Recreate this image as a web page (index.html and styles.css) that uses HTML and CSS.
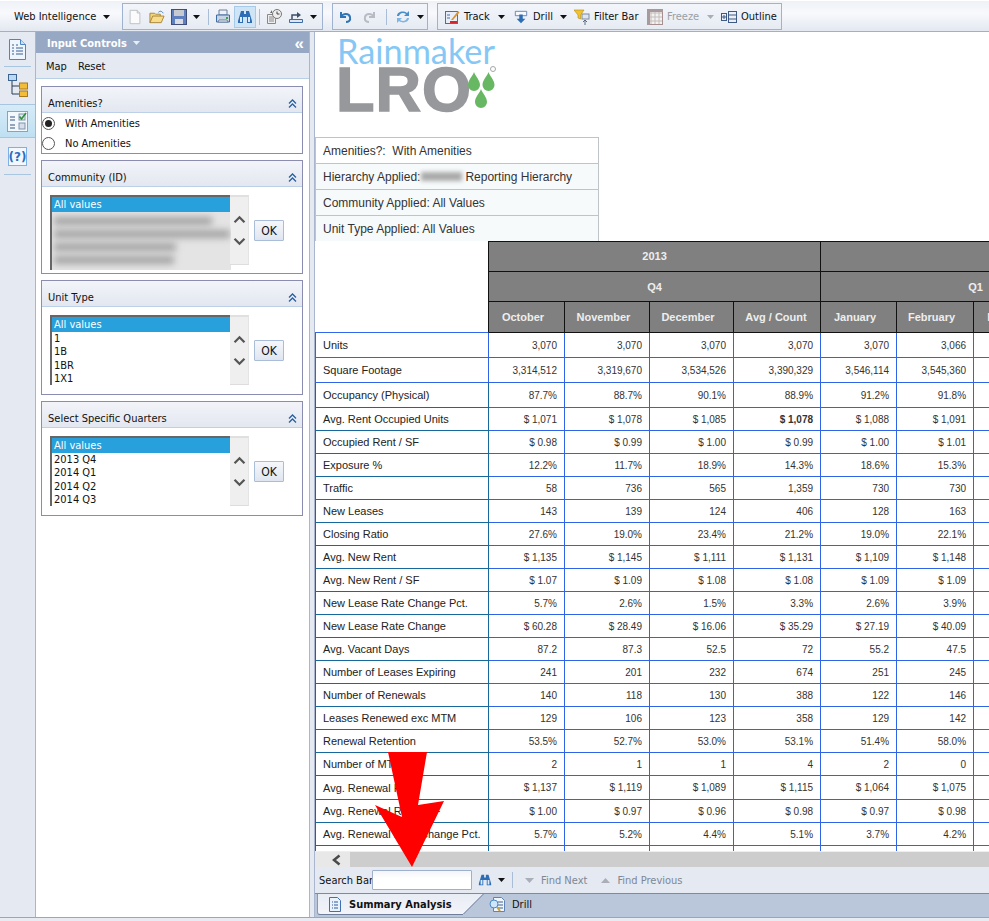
FILE: index.html
```html
<!DOCTYPE html>
<html lang="en">
<head>
<meta charset="utf-8">
<title>Web Intelligence</title>
<link rel="stylesheet" href="styles.css">
</head>
<body>
<svg class="defs" width="0" height="0" aria-hidden="true">
  <defs>
    <symbol id="binoc" viewBox="0 0 16 16"><path d="M4 2h3v3h2V2h3l3 10v2H10V8H6v6H1v-2z" fill="#2d6db5"/><path d="M3 8h2v5H3zm8 0h2v5h-2z" fill="#dcecff"/></symbol>
    <symbol id="caret" viewBox="0 0 7 4"><path d="M0 0h7L3.5 4z"/></symbol>
    <symbol id="dbl" viewBox="0 0 9 9"><path d="M1 4.500 4.500 1 8 4.500M1 8.500 4.500 5 8 8.500" fill="none" stroke="#2a5f9c" stroke-width="1.300"/></symbol>
    <symbol id="up" viewBox="0 0 14 10"><path d="M1.500 8 7 2.500 12.500 8" fill="none" stroke="#555" stroke-width="2.500"/></symbol>
    <symbol id="down" viewBox="0 0 14 10"><path d="M1.500 2 7 7.500 12.500 2" fill="none" stroke="#555" stroke-width="2.500"/></symbol>
  </defs>
</svg>
<div class="app">
  <header class="toolbar">
    <div class="brand"><span>Web Intelligence</span><svg class="caret"><use href="#caret"/></svg></div>
    <div class="tgroup g1">
      <svg class="ic16 nudge" viewBox="0 0 16 18"><path d="M2.500 1.500h8l3 3v12h-11z" fill="#fbfbfb" stroke="#b9bcc0"/><path d="M10.500 1.500v3h3" fill="#e8e8e8" stroke="#b9bcc0"/></svg>
      <svg class="ic16 m6" viewBox="0 0 17 16"><path d="M1 14V4h5l1 1h5v2" fill="#f0d77c" stroke="#a8843c"/><path d="M1 14 4 7h12l-3 7z" fill="#f7dc8a" stroke="#a8843c"/><path d="M10 3c2-2 4-1 5 1" fill="none" stroke="#3778b8"/></svg>
      <svg class="ic16 m6" viewBox="0 0 16 16"><rect x=".5" y=".5" width="15" height="15" fill="#5f7fbe" stroke="#3f4f7a"/><rect x="3" y="1" width="10" height="6" fill="#c6c9cf"/><rect x="4" y="10" width="8" height="5" fill="#d9dce2"/></svg>
      <svg class="caret m6"><use href="#caret"/></svg>
      <i class="tsep s1"></i>
      <svg class="ic16 m6" viewBox="0 0 16 16"><path d="M4 1h8v5H4z" fill="#eef1f6" stroke="#6d7f9a"/><path d="M1.500 6h13v7h-13z" fill="#c7d4e6" stroke="#3d6da8"/><path d="M3 13l1-2h8l1 2z" fill="#fff" stroke="#6d7f9a"/><rect x="11" y="8" width="2" height="2" fill="#37a34a"/></svg>
      <span class="active"><svg class="ic16"><use href="#binoc"/></svg></span>
      <i class="tsep s2"></i>
      <svg class="ic16 m6" viewBox="0 0 16 16"><path d="M1.500 5.500h8v9h-8z" fill="#eee" stroke="#888"/><path d="M3 8h5M3 10h5M3 12h5" stroke="#888"/><circle cx="11" cy="5" r="4.500" fill="#eee" stroke="#777"/><path d="M11 2.500V5h2.500" fill="none" stroke="#444"/><path d="M4 4 6 1v3z" fill="#666"/></svg>
      <svg class="ic16 m6" viewBox="0 0 16 16"><path d="M1.500 10.500h13v3h-13z" fill="#dfe6f0" stroke="#3d6da8"/><path d="M4 10V6h6" fill="none" stroke="#3d4f6a" stroke-width="1.500"/><path d="M9 3l4 3-4 3z" fill="#3d4f6a"/></svg>
      <svg class="caret m6"><use href="#caret"/></svg>
    </div>
    <div class="tgroup g2">
      <svg class="ic14" viewBox="0 0 14 14"><path d="M3 2v5h5M3 7c2-4 8-4 9 0s-2 5-4 5" fill="none" stroke="#2f73b5" stroke-width="2"/></svg>
      <svg class="ic14 m11" viewBox="0 0 14 14"><path d="M11 2v5H6M11 7C9 3 3 3 2 7s2 5 4 5" fill="none" stroke="#b8bcc2" stroke-width="2"/></svg>
      <i class="tsep s3"></i>
      <svg class="ic16 m8" viewBox="0 0 16 16"><path d="M2 7c0-4 6-6 10-3l2-2v5H9l2-2C8 3 5 4 4 7z" fill="#4a8dcb"/><path d="M14 9c0 4-6 6-10 3l-2 2V9h5l-2 2c3 2 6 1 7-2z" fill="#7fb5e3"/></svg>
      <svg class="caret m6"><use href="#caret"/></svg>
    </div>
    <div class="tgroup g3">
      <svg class="ic16" viewBox="0 0 16 16"><rect x="1.500" y="2.500" width="12" height="12" fill="#e8eef8" stroke="#4a6fa8"/><path d="M3 6h3M3 9h3" stroke="#4a6fa8"/><path d="M6 13h7" stroke="#d8232a" stroke-width="2"/><path d="M7 11 14 2l1.500 1.500L9 11z" fill="#e0912f"/></svg>
      <span class="tlabel t1">Track</span>
      <svg class="caret m7"><use href="#caret"/></svg>
      <svg class="ic14 m9" viewBox="0 0 14 16"><path d="M.500 1.500h13v5h-13z" fill="#f6f8fb" stroke="#5a7db0"/><path d="M5 5h4v5h3l-5 5-5-5h3z" fill="#2d6db5"/></svg>
      <span class="tlabel t2 wide">Drill</span>
      <svg class="caret m7"><use href="#caret"/></svg>
      <svg class="ic16 m7" viewBox="0 0 16 16"><path d="M0 1h10L6.500 6v4L4 9V6z" fill="#f2c230" stroke="#b38a12" stroke-width=".6"/><rect x="8" y="5" width="7" height="5" fill="#dfe6f0" stroke="#7a8aa0"/><path d="M11 16v-5M9 13l2-2 2 2" fill="none" stroke="#5a6a80"/></svg>
      <span class="tlabel t3">Filter Bar</span>
      <svg class="ic16 m9" viewBox="0 0 16 16"><rect x=".5" y=".5" width="15" height="15" fill="#f2f2f2" stroke="#a78f8f"/><path d="M1 4h14M1 8h14M1 12h14M4 1v14M8 1v14M12 1v14" stroke="#c4bcbc"/><path d="M0 0h16v3H3v13H0z" fill="#a89a9a"/></svg>
      <span class="tlabel t4 dim">Freeze</span>
      <svg class="caret m8 dimc"><use href="#caret"/></svg>
      <svg class="ic16 m7" viewBox="0 0 16 12"><rect x=".5" y="2.500" width="5" height="7" fill="none" stroke="#3e5a85"/><path d="M1 6h4M3 4v4" stroke="#3e5a85"/><rect x="7.500" y=".5" width="8" height="11" fill="none" stroke="#3e5a85"/><path d="M7.500 4h8M7.500 8h8" stroke="#3e5a85"/></svg>
      <span class="tlabel t5">Outline</span>
    </div>
  </header>

  <div class="main">
    <nav class="rail">
      <div class="rail-item ri1"><svg width="17" height="21" viewBox="0 0 17 21"><path d="M.5.500h11l5 5v15H.5z" fill="#eef5fd" stroke="#4d86c6"/><path d="M11.500.500v5h5" fill="#cfe0f4" stroke="#4d86c6"/><path d="M3 6h2M3 9h2M3 12h2M3 15h2M7 6h2M7 9h7M7 12h7M7 15h7" stroke="#3b5f8f"/></svg></div>
      <i class="rail-sep"></i>
      <div class="rail-item ri2"><svg width="20" height="23" viewBox="0 0 20 23"><rect x=".5" y=".5" width="8" height="6" fill="#bcd9f4" stroke="#3a648f"/><path d="M4 7v13h7M4 12h7" fill="none" stroke="#2a3f55"/><rect x="11.500" y="9" width="8" height="6" fill="#f3bd3a" stroke="#a87a1a"/><rect x="11.500" y="17" width="8" height="5.500" fill="#f3bd3a" stroke="#a87a1a"/></svg></div>
      <div class="rail-item selected"><svg width="21" height="21" viewBox="0 0 21 21"><rect x=".5" y=".5" width="20" height="20" fill="#f3f8fd" stroke="#7aa6cf"/><path d="M3 6h5M3 14h5" stroke="#33557f" stroke-width="1.200"/><path d="M3 9h5M3 17h5" stroke="#33557f" stroke-width="1.200"/><rect x="12" y="3" width="6" height="6" fill="#dfe7f0" stroke="#7f93ad"/><path d="M12.500 5.500 14.500 8 19 2" fill="none" stroke="#2f8f3a" stroke-width="1.600"/><rect x="12" y="12" width="6" height="6" fill="#d6deea" stroke="#7f93ad"/></svg></div>
      <div class="rail-item ri4"><svg width="19" height="19" viewBox="0 0 19 19"><rect x=".5" y=".5" width="18" height="18" fill="#f3f8fe" stroke="#7db0e6"/><text x="9.500" y="14" text-anchor="middle" class="help">(?)</text></svg></div>
      <i class="rail-sep last"></i>
    </nav>

    <aside class="panel">
      <div class="panel-head"><span>Input Controls</span><svg class="caret light"><use href="#caret"/></svg><b class="collapse">«</b></div>
      <div class="panel-sub"><span>Map</span><span>Reset</span></div>
      <div class="cards">
        <section class="card">
          <div class="card-head"><span>Amenities?</span><svg class="dbl"><use href="#dbl"/></svg></div>
          <div class="radios">
            <label class="radio"><i class="dot on"></i>With Amenities</label>
            <label class="radio"><i class="dot"></i>No Amenities</label>
          </div>
        </section>
        <section class="card tall">
          <div class="card-head"><span>Community (ID)</span><svg class="dbl"><use href="#dbl"/></svg></div>
          <div class="card-body short">
            <div class="items blurred">
              <div class="sel">All values</div>
              <div class="smear"><i class="b1"></i><i class="b2"></i><i class="b3"></i><i class="b4"></i></div>
            </div>
            <div class="scroller"><svg><use href="#up"/></svg><svg><use href="#down"/></svg></div>
            <button class="ok">OK</button>
          </div>
        </section>
        <section class="card">
          <div class="card-head"><span>Unit Type</span><svg class="dbl"><use href="#dbl"/></svg></div>
          <div class="card-body">
            <div class="items">
              <div class="sel">All values</div><div>1</div><div>1B</div><div>1BR</div><div>1X1</div>
            </div>
            <div class="scroller"><svg><use href="#up"/></svg><svg><use href="#down"/></svg></div>
            <button class="ok">OK</button>
          </div>
        </section>
        <section class="card">
          <div class="card-head"><span>Select Specific Quarters</span><svg class="dbl"><use href="#dbl"/></svg></div>
          <div class="card-body">
            <div class="items">
              <div class="sel">All values</div><div>2013 Q4</div><div>2014 Q1</div><div>2014 Q2</div><div>2014 Q3</div>
            </div>
            <div class="scroller"><svg><use href="#up"/></svg><svg><use href="#down"/></svg></div>
            <button class="ok">OK</button>
          </div>
        </section>
      </div>
    </aside>

    <main class="report">
      <div class="canvas">
        <div class="logo">
          <div class="logo-top">Rainmaker</div>
          <div class="logo-main">LRO</div>
          <svg class="drops" width="30" height="44" viewBox="0 0 30 44">
            <circle cx="25" cy="3" r="2.500" fill="none" stroke="#a5a6a8"/>
            <path d="M6 6c1.500 4.500 6 8 6 13a6 6 0 0 1-12 0c0-5 4.500-8.500 6-13zM20.500 6c1.500 4.500 6 8 6 13a6 6 0 0 1-12 0c0-5 4.500-8.500 6-13zM13 23c1.500 4.500 6 8 6 13a6 6 0 0 1-12 0c0-5 4.500-8.500 6-13z" fill="#68b763"/>
          </svg>
        </div>
        <div class="info">
          <div>Amenities?:&nbsp; With Amenities</div>
          <div>Hierarchy Applied:<i class="redact"></i>Reporting Hierarchy</div>
          <div>Community Applied: All Values</div>
          <div>Unit Type Applied: All Values</div>
        </div>
        <table class="grid">
          <colgroup><col class="c0"><col class="c1"><col class="c2"><col class="c3"><col class="c4"><col class="c1"><col class="c5"><col class="c6"><col class="c7"><col class="c8"></colgroup>
          <thead>
            <tr><th class="blank" rowspan="3"></th><th colspan="4">2013</th><th colspan="5"></th></tr>
            <tr><th colspan="4">Q4</th><th colspan="4">Q1</th><th></th></tr>
            <tr class="months"><th>October</th><th>November</th><th>December</th><th class="avg">Avg / Count</th><th>January</th><th>February</th><th class="march">March</th><th></th><th></th></tr>
          </thead>
          <tbody>
            <tr class="h25 first"><th>Units</th><td>3,070</td><td>3,070</td><td>3,070</td><td>3,070</td><td>3,070</td><td>3,066</td><td></td><td></td><td></td></tr>
            <tr class="h25 first"><th>Square Footage</th><td>3,314,512</td><td>3,319,670</td><td>3,534,526</td><td>3,390,329</td><td>3,546,114</td><td>3,545,360</td><td></td><td></td><td></td></tr>
            <tr class="h25"><th>Occupancy (Physical)</th><td>87.7%</td><td>88.7%</td><td>90.1%</td><td>88.9%</td><td>91.2%</td><td>91.8%</td><td></td><td></td><td></td></tr>
            <tr><th>Avg. Rent Occupied Units</th><td>$ 1,071</td><td>$ 1,078</td><td>$ 1,085</td><td><b>$ 1,078</b></td><td>$ 1,088</td><td>$ 1,091</td><td></td><td></td><td></td></tr>
            <tr><th>Occupied Rent / SF</th><td>$ 0.98</td><td>$ 0.99</td><td>$ 1.00</td><td>$ 0.99</td><td>$ 1.00</td><td>$ 1.01</td><td></td><td></td><td></td></tr>
            <tr><th>Exposure %</th><td>12.2%</td><td>11.7%</td><td>18.9%</td><td>14.3%</td><td>18.6%</td><td>15.3%</td><td></td><td></td><td></td></tr>
            <tr><th>Traffic</th><td>58</td><td>736</td><td>565</td><td>1,359</td><td>730</td><td>730</td><td></td><td></td><td></td></tr>
            <tr><th>New Leases</th><td>143</td><td>139</td><td>124</td><td>406</td><td>128</td><td>163</td><td></td><td></td><td></td></tr>
            <tr><th>Closing Ratio</th><td>27.6%</td><td>19.0%</td><td>23.4%</td><td>21.2%</td><td>19.0%</td><td>22.1%</td><td></td><td></td><td></td></tr>
            <tr><th>Avg. New Rent</th><td>$ 1,135</td><td>$ 1,145</td><td>$ 1,111</td><td>$ 1,131</td><td>$ 1,109</td><td>$ 1,148</td><td></td><td></td><td></td></tr>
            <tr><th>Avg. New Rent / SF</th><td>$ 1.07</td><td>$ 1.09</td><td>$ 1.08</td><td>$ 1.08</td><td>$ 1.09</td><td>$ 1.09</td><td></td><td></td><td></td></tr>
            <tr><th>New Lease Rate Change Pct.</th><td>5.7%</td><td>2.6%</td><td>1.5%</td><td>3.3%</td><td>2.6%</td><td>3.9%</td><td></td><td></td><td></td></tr>
            <tr><th>New Lease Rate Change</th><td>$ 60.28</td><td>$ 28.49</td><td>$ 16.06</td><td>$ 35.29</td><td>$ 27.19</td><td>$ 40.09</td><td></td><td></td><td></td></tr>
            <tr><th>Avg. Vacant Days</th><td>87.2</td><td>87.3</td><td>52.5</td><td>72</td><td>55.2</td><td>47.5</td><td></td><td></td><td></td></tr>
            <tr><th>Number of Leases Expiring</th><td>241</td><td>201</td><td>232</td><td>674</td><td>251</td><td>245</td><td></td><td></td><td></td></tr>
            <tr><th>Number of Renewals</th><td>140</td><td>118</td><td>130</td><td>388</td><td>122</td><td>146</td><td></td><td></td><td></td></tr>
            <tr><th>Leases Renewed exc MTM</th><td>129</td><td>106</td><td>123</td><td>358</td><td>129</td><td>142</td><td></td><td></td><td></td></tr>
            <tr><th>Renewal Retention</th><td>53.5%</td><td>52.7%</td><td>53.0%</td><td>53.1%</td><td>51.4%</td><td>58.0%</td><td></td><td></td><td></td></tr>
            <tr><th>Number of MTM</th><td>2</td><td>1</td><td>1</td><td>4</td><td>2</td><td>0</td><td></td><td></td><td></td></tr>
            <tr class="h24"><th>Avg. Renewal Rent</th><td>$ 1,137</td><td>$ 1,119</td><td>$ 1,089</td><td>$ 1,115</td><td>$ 1,064</td><td>$ 1,075</td><td></td><td></td><td></td></tr>
            <tr><th>Avg. Renewal Rent / SF</th><td>$ 1.00</td><td>$ 0.97</td><td>$ 0.96</td><td>$ 0.98</td><td>$ 0.97</td><td>$ 0.98</td><td></td><td></td><td></td></tr>
            <tr><th>Avg. Renewal Rate Change Pct.</th><td>5.7%</td><td>5.2%</td><td>4.4%</td><td>5.1%</td><td>3.7%</td><td>4.2%</td><td></td><td></td><td></td></tr>
            <tr><th></th><td></td><td></td><td></td><td></td><td></td><td></td><td></td><td></td><td></td></tr>
          </tbody>
        </table>
      </div>
      <div class="hscroll"><span class="hbtn"><svg width="11" height="12" viewBox="0 0 11 12"><path d="M8.500 1.500 3 6l5.500 4.500" fill="none" stroke="#4a4a4a" stroke-width="2.500"/></svg></span></div>
      <div class="searchbar">
        <label class="search-label">Search Bar</label>
        <input class="search-input" type="text" aria-label="Search Bar">
        <svg class="ic14 m6"><use href="#binoc"/></svg>
        <svg class="caret m6"><use href="#caret"/></svg>
        <i class="tsep s4"></i>
        <svg class="tri" viewBox="0 0 9 5"><path d="M0 0h9L4.500 5z"/></svg>
        <span class="find f1">Find Next</span>
        <svg class="tri t-up" viewBox="0 0 9 5"><path d="M0 5h9L4.500 0z"/></svg>
        <span class="find">Find Previous</span>
      </div>
      <div class="tabs">
        <div class="tab active-tab">
          <svg width="12" height="15" viewBox="0 0 12 15"><path d="M.5.500h8l3 3v11H.5z" fill="#eaf2fc" stroke="#3f6fb5"/><path d="M3 5h1M3 8h1M3 11h1M5 5h4M5 8h4M5 11h4" stroke="#2f5a9a"/></svg>
          <span class="tab-name">Summary Analysis</span>
        </div>
        <div class="tab other-tab">
          <svg width="16" height="15" viewBox="0 0 16 15"><path d="M4.500.500h8l3 3v11h-11z" fill="#f1f6fc" stroke="#5f83b5"/><path d="M9 5h5M9 8h5M9 11h5" stroke="#3f5f8f"/><circle cx="5" cy="7" r="4" fill="#cfe6fa" stroke="#4a88c8"/><path d="M8 10l3 4" stroke="#c9a23a" stroke-width="2"/></svg>
          <span>Drill</span>
        </div>
      </div>
    </main>
  </div>
  <footer class="strip"></footer>
</div>
<svg class="arrow" width="75" height="118" viewBox="0 0 75 118"><polygon points="14,1 53,1 44,54 70,50 38,116 1,54 28,66" fill="#fe0000"/></svg>
</body>
</html>
```
FILE: styles.css
```css
* { box-sizing: border-box; }
html, body { margin: 0; padding: 0; }
body { width: 989px; height: 921px; overflow: hidden; position: relative; background: #e4e9f2; font: 11px "DejaVu Sans Condensed", "DejaVu Sans", sans-serif; color: #111; }
.defs { position: absolute; }
.app { display: flex; flex-direction: column; width: 989px; height: 921px; }

/* toolbar */
.toolbar { height: 32px; flex: none; display: flex; align-items: center; gap: 9px; padding: 1px 0 0 14px; background: linear-gradient(#eef1f7 0, #f8f9fc 40%, #e3e8f1 100%); border-top: 1px solid #fff; border-bottom: 1px solid #9fb0cc; white-space: nowrap; }
.brand { width: 99px; flex: none; display: flex; align-items: center; gap: 7px; }
.tgroup { height: 27px; flex: none; display: flex; align-items: center; border: 1px solid #9fb3d0; background: linear-gradient(#f3f5fa, #e6ebf3); padding-left: 6px; }
.g1 { width: 201px; padding-left: 4px; }
.g2 { width: 96px; padding-left: 5px; }
.g3 { width: 345px; }
.caret { width: 7px; height: 4px; fill: #111; flex: none; }
.ic16 { width: 16px; height: 16px; flex: none; }
.ic14 { width: 14px; height: 14px; flex: none; }
.m6 { margin-left: 6px; } .m7 { margin-left: 7px; } .m8 { margin-left: 8px; } .m9 { margin-left: 9px; } .m11 { margin-left: 11px; }
.tsep { width: 1px; height: 16px; background: #a9bdd6; flex: none; }
.s1 { margin-left: 8px; } .s2 { margin-left: 3px; } .s3 { margin-left: 9px; } .s4 { margin-left: 7px; }
.active { width: 22px; height: 22px; margin-left: 3px; display: flex; align-items: center; justify-content: center; background: #cfe4f5; border: 1px solid #a5cbe8; }
.tlabel { margin-left: 4px; flex: none; }
.tlabel.wide { margin-left: 5px; }
.t1 { width: 27px; } .t2 { width: 20px; } .t3 { width: 44px; } .t4 { width: 32px; }
.dim { color: #9a9fa6; }
.dimc { fill: #a9aeb6; }

/* main */
.main { flex: 1; min-height: 0; display: flex; }
.rail { width: 36px; flex: none; background: #e4e9f2; border-right: 1px solid #a9b6cd; display: flex; flex-direction: column; align-items: center; }
.rail-item { display: flex; justify-content: center; width: 100%; }
.ri1 { margin-top: 7px; }
.rail-sep { display: block; width: 27px; height: 1px; background: #a8c6e0; margin-top: 6px; flex: none; }
.ri2 { margin-top: 7px; }
.selected { margin-top: 7px; height: 34px; align-items: center; background: linear-gradient(#d6ebf8, #bfe0f2); border-top: 1px solid #a8c6e0; border-bottom: 1px solid #a8c6e0; }
.ri4 { margin-top: 9px; }
.help { font: bold 12px "DejaVu Sans", sans-serif; fill: #2a6fc0; }
.rail-sep.last { margin-top: 8px; }

.panel { width: 274px; flex: none; background: #fff; border-right: 1px solid #a9b6cd; display: flex; flex-direction: column; }
.panel-head { height: 21px; flex: none; display: flex; align-items: center; padding: 1px 5px 0 11px; background: #97a8c5; color: #fff; font-weight: bold; gap: 6px; }
.caret.light { fill: #e8eef6; }
.collapse { margin-left: auto; font: bold 17px/15px "Liberation Sans", sans-serif; color: #fff; }
.panel-sub { height: 26px; flex: none; display: flex; align-items: center; gap: 11px; padding: 1px 0 0 10px; background: #e4e9f2; border-bottom: 1px solid #b8d0e6; }
.cards { padding: 7px 6px 0 5px; display: flex; flex-direction: column; gap: 6px; }
.card { border: 1px solid #8a8cb0; background: #fff; }
.card-head { height: 26px; display: flex; align-items: center; justify-content: space-between; padding: 7px 5px 0 6px; background: linear-gradient(#f2f4f9, #e3e7f0); border-bottom: 1px solid #bcd0e8; }
.dbl { width: 9px; height: 9px; }
.radios { display: flex; flex-direction: column; height: 40px; }
.radio { height: 20px; display: flex; align-items: center; gap: 10px; }
.dot { width: 13px; height: 13px; border-radius: 50%; border: 1px solid #555; background: #fff; display: flex; align-items: center; justify-content: center; }
.dot.on::after { content: ""; width: 7px; height: 7px; border-radius: 50%; background: #222; }
.card-body { display: flex; align-items: flex-start; padding: 8px 0 9px 8px; }
.card-body.short { padding-bottom: 3px; }
.items { width: 181px; height: 70px; flex: none; overflow: hidden; background: #fff; border-top: 2px solid #666; border-left: 2px solid #666; line-height: 13.300px; }
.items .sel { height: 15px; line-height: 15px; background: #28a0dc; color: #fff; padding-left: 2px; }
.items div { padding-left: 2px; }
.items.blurred { height: 75px; }
.smear { height: 60px; padding: 0 !important; background: #e4e4e4; overflow: hidden; }
.smear i { display: block; height: 8px; margin: 5px 0 0 2px; background: #a2a2a2; filter: blur(3.500px); }
.b1 { width: 158px; } .b2 { width: 176px; } .b3 { width: 122px; } .b4 { width: 120px; }
.scroller { width: 19px; height: 70px; flex: none; background: #efefef; border-top: 2px solid #e0e0e0; border-right: 1px solid #e4e4e4; border-bottom: 1px solid #ddd; display: flex; flex-direction: column; align-items: center; padding-top: 18px; gap: 13px; margin-left: -1px; }
.scroller svg { width: 13px; height: 9px; flex: none; }
.ok { width: 30px; height: 21px; margin: 25px 0 0 5px; padding: 0; font: inherit; font-size: 12px; color: #111; background: linear-gradient(#f5f7fb, #dfe5f0); border: 1px solid #a9bcd8; border-radius: 1px; }

/* report */
.report { flex: 1; min-width: 0; margin-left: 4px; display: flex; flex-direction: column; border-left: 1px solid #a9b6cd; }
.canvas { flex: 1; min-height: 0; overflow: hidden; background: #fff; }
.logo { height: 105px; padding: 2px 0 0 22px; position: relative; }
.logo-top { font: 34.300px/33px Lato, sans-serif; color: #85c8f5; }
.logo-main { font: bold 63px/44px "Liberation Sans", sans-serif; color: #97989b; letter-spacing: 1px; margin-left: -1px; -webkit-text-stroke: 1.500px #97989b; }
.drops { position: absolute; left: 153px; top: 34px; }
.info { width: 284px; border: 1px solid #bfc4c8; font: 12px "Liberation Sans", sans-serif; color: #333; }
.info div { height: 26px; padding-left: 7px; display: flex; align-items: center; background: #f7fafb; border-bottom: 1px solid #bfc4c8; white-space: pre; }
.info div:first-child { background: #fff; }
.info div:last-child { border-bottom: 0; height: 25px; }
.redact { display: inline-block; width: 41px; height: 9px; margin: 0 3px 0 1px; background: #aaa; filter: blur(2px); }

.grid { width: 1116px; margin-top: -1px; table-layout: fixed; border-collapse: separate; border-spacing: 0; font: 10px "Liberation Sans", sans-serif; }
.c0 { width: 174px; } .c1 { width: 76px; } .c2 { width: 85px; } .c3 { width: 84px; } .c4 { width: 87px; } .c5 { width: 77px; } .c6 { width: 60px; } .c7 { width: 97px; } .c8 { width: 300px; }
thead th { height: 30px; padding: 0; background: #808080; color: #eee; font: bold 11px "Liberation Sans", sans-serif; text-align: center; border-right: 1px solid #111; border-bottom: 1px solid #111; }
thead tr:first-child th { border-top: 1px solid #111; height: 31px; padding-bottom: 2px; }
thead .months th { height: 31px; padding-right: 7px; }
thead .months th.avg { padding-right: 2px; }
thead .months th.march { padding-right: 0; }
thead th.blank { background: #fff; border: 0; border-right: 1px solid #111; border-top: 0 !important; border-bottom: 1px solid #3366ee; }
tbody th { height: 23px; padding: 0 0 0 7px; font: 11px "Liberation Sans", sans-serif; color: #222; text-align: left; white-space: nowrap; overflow: hidden; border-left: 1px solid #17689c; border-right: 1px solid #17689c; border-bottom: 1px solid #17689c; }
tbody td { height: 23px; padding: 0 7px 0 0; color: #333; text-align: right; border-right: 1px solid #2f63e8; border-bottom: 1px solid #2f63e8; }
tbody .h25 th, tbody .h25 td { height: 25px; }
tbody .h24 th, tbody .h24 td { height: 24px; }
tbody .first th { border-color: #2f63e8; }

.hscroll { height: 16px; flex: none; background: #cdcdcd; border-top: 1px solid #eee; }
.hbtn { display: flex; align-items: center; justify-content: center; width: 35px; height: 15px; padding-left: 8px; background: #e8e8e8; }
.searchbar { height: 26px; flex: none; display: flex; align-items: center; padding: 0 0 0 4px; background: #e4e9f2; white-space: nowrap; }
.search-label { width: 53px; flex: none; }
.search-input { width: 100px; height: 20px; flex: none; padding: 0; background: linear-gradient(#f3f5fa, #fff 40%); border: 1px solid #9fb0cc; border-radius: 1px; }
.tri { width: 9px; height: 5px; fill: #a9aeb8; margin-left: 12px; flex: none; }
.t-up { margin-left: 14px; }
.find { margin-left: 7px; color: #7e8794; }
.tabs { height: 24px; flex: none; display: flex; align-items: flex-start; background: #bac6d9; border-top: 1px solid #7a8aa8; white-space: nowrap; }
.tab { display: flex; align-items: center; height: 21px; }
.active-tab { position: relative; width: 146px; margin-left: 2px; padding-left: 11px; gap: 8px; font-weight: bold; background: linear-gradient(#e8ecf4, #f2f4f9); border-left: 1px solid #8a98b5; border-bottom: 1px solid #6e7e9c; border-radius: 0 0 0 3px; }
.active-tab::after { content: ""; position: absolute; right: -11px; top: 0; width: 22px; height: 20px; background: linear-gradient(#e8ecf4, #f2f4f9); border-right: 1px solid #6e7e9c; transform: skewX(-45deg); }
.tab-name { position: relative; z-index: 1; }
.other-tab { margin-left: 26px; gap: 7px; }
.strip { height: 4px; flex: none; background: #e8ecf2; border-top: 1px solid #9aa6ba; }
.arrow { position: absolute; left: 374px; top: 751px; }
```
